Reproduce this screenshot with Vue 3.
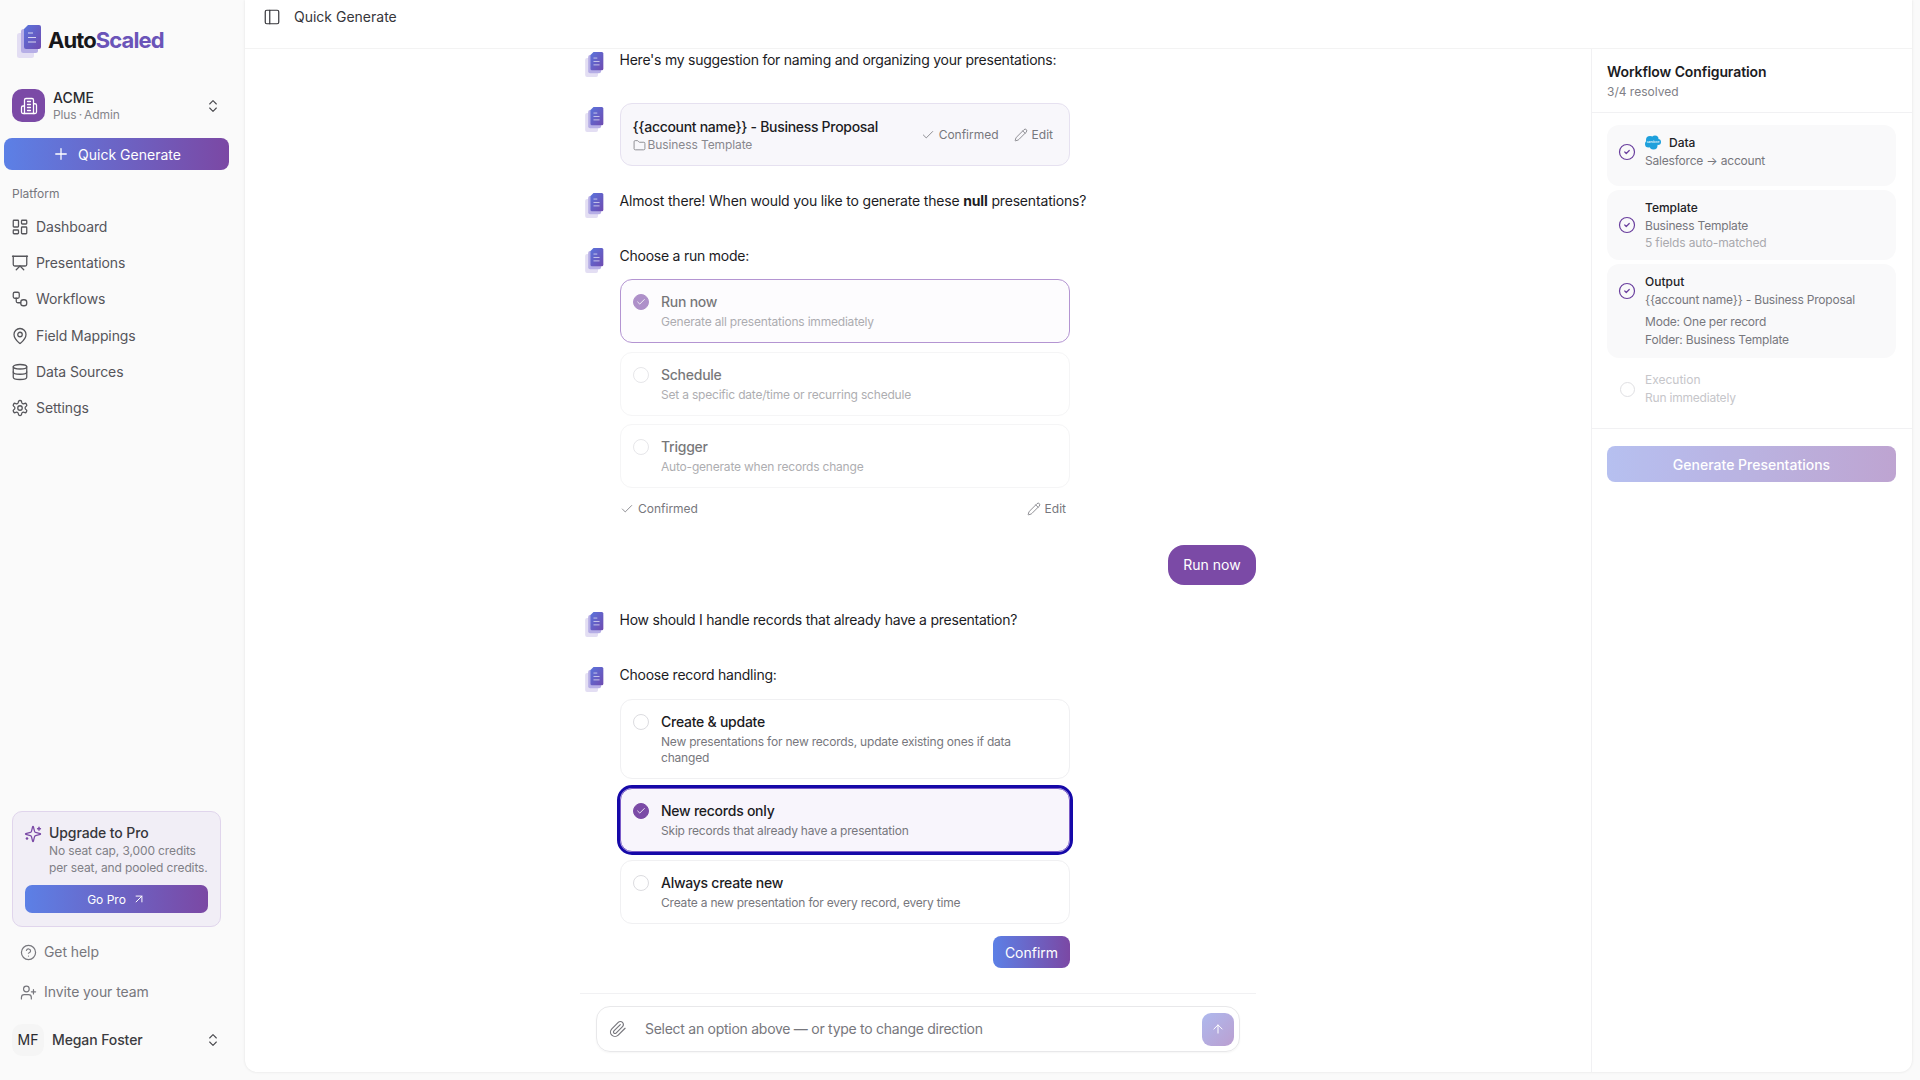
<template>
  <div class="page">
    <aside class="sidebar">
      <div class="logo">
        <svg class="logo-mark" viewBox="0 0 24 33" v-html="docMark"></svg>
        <span class="logo-text">Auto<span class="logo-accent">Scaled</span></span>
      </div>

      <div class="org">
        <span class="org-icon"><svg class="ic ic-18" viewBox="0 0 24 24" v-html="icons.building"></svg></span>
        <div class="org-text">
          <div class="org-name">ACME</div>
          <div class="org-plan">Plus&#8201;·&#8201;Admin</div>
        </div>
        <svg class="ic ic-16 chev" viewBox="0 0 24 24" v-html="icons.chevrons"></svg>
      </div>

      <button class="quick">
        <svg class="ic ic-18" viewBox="0 0 24 24" v-html="icons.plus"></svg>
        Quick Generate
      </button>

      <div class="section">Platform</div>
      <nav class="nav">
        <a v-for="n in nav" :key="n.label" class="nav-item">
          <svg class="ic ic-18" viewBox="0 0 24 24" v-html="icons[n.icon]"></svg>
          {{ n.label }}
        </a>
      </nav>

      <div class="upgrade">
        <div class="upgrade-head">
          <svg class="ic ic-18 sparkle" viewBox="0 0 24 24" v-html="icons.sparkles"></svg>
          <div>
            <div class="upgrade-title">Upgrade to Pro</div>
            <div class="upgrade-text">No seat cap, 3,000 credits per seat, and pooled credits.</div>
          </div>
        </div>
        <button class="gopro">Go Pro <svg class="ic ic-14" viewBox="0 0 24 24" v-html="icons.arrowUpRight"></svg></button>
      </div>

      <a class="side-link"><svg class="ic ic-17" viewBox="0 0 24 24" v-html="icons.help"></svg>Get help</a>
      <a class="side-link"><svg class="ic ic-17" viewBox="0 0 24 24" v-html="icons.userPlus"></svg>Invite your team</a>

      <div class="user">
        <span class="user-avatar">MF</span>
        <span class="user-name">Megan Foster</span>
        <svg class="ic ic-16 chev" viewBox="0 0 24 24" v-html="icons.chevrons"></svg>
      </div>
    </aside>

    <main class="main">
      <header class="topbar">
        <svg class="ic ic-18 panel-ic" viewBox="0 0 24 24" v-html="icons.panel"></svg>
        <span>Quick Generate</span>
      </header>

      <div class="body">
        <section class="chat">
          <div class="thread">
            <div class="msg first">
              <svg class="avatar" viewBox="0 0 24 33" v-html="docMark"></svg>
              <p>Here's my suggestion for naming and organizing your presentations:</p>
            </div>

            <div class="msg name-row">
              <svg class="avatar" viewBox="0 0 24 33" v-html="docMark"></svg>
              <div class="name-card">
                <div>
                  <div class="name-title">{{ accountName }} - Business Proposal</div>
                  <div class="name-sub"><svg class="ic ic-13" viewBox="0 0 24 24" v-html="icons.folder"></svg>Business Template</div>
                </div>
                <div class="name-actions">
                  <span class="meta"><svg class="ic ic-14" viewBox="0 0 24 24" v-html="icons.check"></svg>Confirmed</span>
                  <span class="meta"><svg class="ic ic-14" viewBox="0 0 24 24" v-html="icons.pencil"></svg>Edit</span>
                </div>
              </div>
            </div>

            <div class="msg almost">
              <svg class="avatar" viewBox="0 0 24 33" v-html="docMark"></svg>
              <p>Almost there! When would you like to generate these <b>null</b> presentations?</p>
            </div>

            <div class="msg choose">
              <svg class="avatar" viewBox="0 0 24 33" v-html="docMark"></svg>
              <p>Choose a run mode:</p>
            </div>

            <div class="options">
              <div v-for="o in runModes" :key="o.title" class="opt faded" :class="{ selected: o.selected }">
                <span class="radio" :class="{ on: o.selected }">
                  <svg v-if="o.selected" class="ic ic-10" viewBox="0 0 24 24" v-html="icons.check"></svg>
                </span>
                <div>
                  <div class="opt-title">{{ o.title }}</div>
                  <div class="opt-sub">{{ o.sub }}</div>
                </div>
              </div>
            </div>
            <div class="confirmed-row">
              <span class="meta"><svg class="ic ic-14" viewBox="0 0 24 24" v-html="icons.check"></svg>Confirmed</span>
              <span class="meta"><svg class="ic ic-14" viewBox="0 0 24 24" v-html="icons.pencil"></svg>Edit</span>
            </div>

            <div class="bubble">Run now</div>

            <div class="msg handle">
              <svg class="avatar" viewBox="0 0 24 33" v-html="docMark"></svg>
              <p>How should I handle records that already have a presentation?</p>
            </div>

            <div class="msg choose">
              <svg class="avatar" viewBox="0 0 24 33" v-html="docMark"></svg>
              <p>Choose record handling:</p>
            </div>

            <div class="options options-b">
              <div v-for="o in recordModes" :key="o.title" class="opt" :class="{ active: o.selected }">
                <span class="radio" :class="{ on: o.selected }">
                  <svg v-if="o.selected" class="ic ic-10" viewBox="0 0 24 24" v-html="icons.check"></svg>
                </span>
                <div>
                  <div class="opt-title">{{ o.title }}</div>
                  <div class="opt-sub">{{ o.sub }}</div>
                </div>
              </div>
            </div>
            <div class="confirm-row">
              <button class="confirm">Confirm</button>
            </div>
          </div>

          <div class="composer">
            <div class="input">
              <svg class="ic ic-18 clip" viewBox="0 0 24 24" v-html="icons.clip"></svg>
              <span class="placeholder">Select an option above — or type to change direction</span>
              <button class="send"><svg class="ic ic-14" viewBox="0 0 24 24" v-html="icons.arrowUp"></svg></button>
            </div>
          </div>
        </section>

        <aside class="panel">
          <div class="panel-head">
            <div class="panel-title">Workflow Configuration</div>
            <div class="panel-sub">3/4 resolved</div>
          </div>
          <div class="steps">
            <div class="step step-data">
              <div class="step-row">
                <svg class="ic ic-18 tick" viewBox="0 0 24 24" v-html="icons.circleCheck"></svg>
                <div>
                  <div class="step-title">
                    <svg class="sf" viewBox="0 0 32 30">
                      <g fill="#1ea0dc">
                        <circle cx="10" cy="10" r="8" />
                        <circle cx="20" cy="8" r="7" />
                        <circle cx="26" cy="14" r="6" />
                        <circle cx="17" cy="21" r="8" />
                        <circle cx="7" cy="18" r="7" />
                      </g>
                      <text x="16" y="16" class="sf-text">salesforce</text>
                    </svg>
                    Data
                  </div>
                  <div class="step-line">Salesforce → account</div>
                </div>
              </div>
            </div>
            <div class="step">
              <div class="step-row">
                <svg class="ic ic-18 tick" viewBox="0 0 24 24" v-html="icons.circleCheck"></svg>
                <div>
                  <div class="step-title">Template</div>
                  <div class="step-line">Business Template</div>
                  <div class="step-note">5 fields auto-matched</div>
                </div>
              </div>
            </div>
            <div class="step">
              <div class="step-row">
                <svg class="ic ic-18 tick" viewBox="0 0 24 24" v-html="icons.circleCheck"></svg>
                <div>
                  <div class="step-title">Output</div>
                  <div class="step-line">{{ accountName }} - Business Proposal</div>
                </div>
              </div>
              <div class="step-extra">
                <div class="step-line">Mode: One per record</div>
                <div class="step-line">Folder: Business Template</div>
              </div>
            </div>
            <div class="step pending">
              <div class="step-row">
                <span class="empty-tick"></span>
                <div>
                  <div class="step-title">Execution</div>
                  <div class="step-line">Run immediately</div>
                </div>
              </div>
            </div>
          </div>
          <div class="panel-foot">
            <button class="generate">Generate Presentations</button>
          </div>
        </aside>
      </div>
    </main>
  </div>
</template>

<script setup>
const accountName = '{{account name}}'

const docMark = `
  <defs><linearGradient id="docg" x1="0" y1="0" x2="1" y2="1"><stop offset="0" stop-color="#5a74dc"/><stop offset="1" stop-color="#6f4bb0"/></linearGradient></defs>
  <rect x="0" y="8" width="17" height="25" rx="2.5" fill="#e3def3"/>
  <rect x="4" y="4" width="17" height="24" rx="2.5" fill="#b6aee6"/>
  <path d="M11 0h11a2 2 0 0 1 2 2v20a2 2 0 0 1-2 2H9a2 2 0 0 1-2-2V4z" fill="url(#docg)"/>
  <path d="M11 8h5M11 12.5h8M11 17h8" stroke="#fff" stroke-opacity=".75" stroke-width="1.1" fill="none"/>`

const icons = {
  building: '<path d="M6 22V4a2 2 0 0 1 2-2h8a2 2 0 0 1 2 2v18Z"/><path d="M6 12H4a2 2 0 0 0-2 2v6a2 2 0 0 0 2 2h2"/><path d="M18 9h2a2 2 0 0 1 2 2v9a2 2 0 0 1-2 2h-2"/><path d="M10 6h4"/><path d="M10 10h4"/><path d="M10 14h4"/><path d="M10 18h4"/>',
  chevrons: '<path d="m7 15 5 5 5-5"/><path d="m7 9 5-5 5 5"/>',
  plus: '<path d="M5 12h14"/><path d="M12 5v14"/>',
  dashboard: '<rect width="7" height="9" x="3" y="3" rx="1"/><rect width="7" height="5" x="14" y="3" rx="1"/><rect width="7" height="9" x="14" y="12" rx="1"/><rect width="7" height="5" x="3" y="16" rx="1"/>',
  presentation: '<path d="M2 3h20"/><path d="M21 3v11a2 2 0 0 1-2 2H5a2 2 0 0 1-2-2V3"/><path d="m7 21 5-5 5 5"/>',
  workflow: '<rect width="8" height="8" x="3" y="3" rx="2"/><path d="M7 11v4a2 2 0 0 0 2 2h4"/><rect width="8" height="8" x="13" y="13" rx="3.5"/>',
  pin: '<path d="M20 10c0 4.993-5.539 10.193-7.399 11.799a1 1 0 0 1-1.202 0C9.539 20.193 4 14.993 4 10a8 8 0 0 1 16 0"/><circle cx="12" cy="10" r="3"/>',
  database: '<ellipse cx="12" cy="5" rx="9" ry="3"/><path d="M3 5V19A9 3 0 0 0 21 19V5"/><path d="M3 12A9 3 0 0 0 21 12"/>',
  settings: '<path d="M12.22 2h-.44a2 2 0 0 0-2 2v.18a2 2 0 0 1-1 1.73l-.43.25a2 2 0 0 1-2 0l-.15-.08a2 2 0 0 0-2.73.73l-.22.38a2 2 0 0 0 .73 2.73l.15.1a2 2 0 0 1 1 1.72v.51a2 2 0 0 1-1 1.74l-.15.09a2 2 0 0 0-.73 2.73l.22.38a2 2 0 0 0 2.73.73l.15-.08a2 2 0 0 1 2 0l.43.25a2 2 0 0 1 1 1.73V20a2 2 0 0 0 2 2h.44a2 2 0 0 0 2-2v-.18a2 2 0 0 1 1-1.73l.43-.25a2 2 0 0 1 2 0l.15.08a2 2 0 0 0 2.73-.73l.22-.39a2 2 0 0 0-.73-2.73l-.15-.08a2 2 0 0 1-1-1.74v-.5a2 2 0 0 1 1-1.74l.15-.09a2 2 0 0 0 .73-2.73l-.22-.38a2 2 0 0 0-2.73-.73l-.15.08a2 2 0 0 1-2 0l-.43-.25a2 2 0 0 1-1-1.73V4a2 2 0 0 0-2-2z"/><circle cx="12" cy="12" r="3"/>',
  sparkles: '<path d="M9.937 15.5A2 2 0 0 0 8.5 14.063l-6.135-1.582a.5.5 0 0 1 0-.962L8.5 9.936A2 2 0 0 0 9.937 8.5l1.582-6.135a.5.5 0 0 1 .963 0L14.063 8.5A2 2 0 0 0 15.5 9.937l6.135 1.581a.5.5 0 0 1 0 .964L15.5 14.063a2 2 0 0 0-1.437 1.437l-1.582 6.135a.5.5 0 0 1-.963 0z"/><path d="M20 3v4"/><path d="M22 5h-4"/><path d="M4 17v2"/><path d="M5 18H3"/>',
  arrowUpRight: '<path d="M7 7h10v10"/><path d="M7 17 17 7"/>',
  help: '<circle cx="12" cy="12" r="10"/><path d="M9.09 9a3 3 0 0 1 5.83 1c0 2-3 3-3 3"/><path d="M12 17h.01"/>',
  userPlus: '<path d="M16 21v-2a4 4 0 0 0-4-4H6a4 4 0 0 0-4 4v2"/><circle cx="9" cy="7" r="4"/><path d="M19 8v6"/><path d="M22 11h-6"/>',
  panel: '<rect width="18" height="18" x="3" y="3" rx="2"/><path d="M9 3v18"/>',
  folder: '<path d="M20 20a2 2 0 0 0 2-2V8a2 2 0 0 0-2-2h-7.9a2 2 0 0 1-1.69-.9L9.6 3.9A2 2 0 0 0 7.93 3H4a2 2 0 0 0-2 2v13a2 2 0 0 0 2 2Z"/>',
  check: '<path d="M20 6 9 17l-5-5"/>',
  pencil: '<path d="M21.174 6.812a1 1 0 0 0-3.986-3.987L3.842 16.174a2 2 0 0 0-.5.83l-1.321 4.352a.5.5 0 0 0 .623.622l4.353-1.32a2 2 0 0 0 .83-.497z"/><path d="m15 5 4 4"/>',
  clip: '<path d="m21.44 11.05-9.19 9.19a6 6 0 0 1-8.49-8.49l8.57-8.57A4 4 0 1 1 18 8.84l-8.59 8.57a2 2 0 0 1-2.83-2.83l8.49-8.48"/>',
  arrowUp: '<path d="m5 12 7-7 7 7"/><path d="M12 19V5"/>',
  circleCheck: '<circle cx="12" cy="12" r="10"/><path d="m9 12 2 2 4-4"/>',
}

const nav = [
  { label: 'Dashboard', icon: 'dashboard' },
  { label: 'Presentations', icon: 'presentation' },
  { label: 'Workflows', icon: 'workflow' },
  { label: 'Field Mappings', icon: 'pin' },
  { label: 'Data Sources', icon: 'database' },
  { label: 'Settings', icon: 'settings' },
]

const runModes = [
  { title: 'Run now', sub: 'Generate all presentations immediately', selected: true },
  { title: 'Schedule', sub: 'Set a specific date/time or recurring schedule' },
  { title: 'Trigger', sub: 'Auto-generate when records change' },
]

const recordModes = [
  { title: 'Create & update', sub: 'New presentations for new records, update existing ones if data changed' },
  { title: 'New records only', sub: 'Skip records that already have a presentation', selected: true },
  { title: 'Always create new', sub: 'Create a new presentation for every record, every time' },
]
</script>

<style>
html, body { margin: 0; background: #fafafa; overflow: hidden; }
</style>

<style scoped>
.page {
  display: flex;
  height: 1080px;
  background: #fafafa;
  font-family: Inter, "Liberation Sans", sans-serif;
  font-size: 14px;
  line-height: 20px;
  color: #1c1c1f;
  overflow: hidden;
}
p { margin: 0; letter-spacing: -0.24px; }
button { font-family: inherit; border: 0; cursor: pointer; }

.ic { fill: none; stroke: currentColor; stroke-width: 1.7; stroke-linecap: round; stroke-linejoin: round; flex: none; display: block; }
.ic-10 { width: 10px; height: 10px; stroke-width: 2; }
.ic-13 { width: 13px; height: 13px; }
.ic-14 { width: 14px; height: 14px; }
.ic-16 { width: 16px; height: 16px; }
.ic-17 { width: 17px; height: 17px; }
.ic-18 { width: 18px; height: 18px; }

/* sidebar */
.sidebar { width: 245px; flex: none; display: flex; flex-direction: column; height: 1080px; box-sizing: border-box; }
.logo { display: flex; align-items: center; padding: 25px 0 0 17px; height: 33px; }
.logo-mark { width: 24px; height: 33px; flex: none; }
.logo-text { margin: 0 0 4px 7px; font-size: 22px; font-weight: 700; letter-spacing: -0.9px; color: #17171a; }
.logo-accent { color: #6a54b8; }

.org { display: flex; align-items: center; margin: 31px 0 0 12px; width: 209px; height: 33px; }
.org-icon { width: 33px; height: 33px; border-radius: 10px; background: #7b4aa6; color: #fff; display: flex; align-items: center; justify-content: center; }
.org-text { margin-left: 8px; flex: 1; }
.org-name { font-size: 14px; line-height: 17px; font-weight: 500; color: #2a2a2e; }
.org-plan { font-size: 12px; line-height: 16px; margin-top: 1px; letter-spacing: -0.1px; color: #85858b; }
.chev { color: #47474c; stroke-width: 1.6; }

.quick {
  margin: 16px 0 0 4px; width: 225px; height: 32px; border-radius: 8px; color: #fff; font-size: 14px;
  background: linear-gradient(90deg, #5c80e6, #7b48a4);
  display: flex; align-items: center; justify-content: center; gap: 8px;
}

.section { margin: 16px 0 0 12px; font-size: 12px; line-height: 16px; color: #77777d; }
.nav { margin-top: 7px; display: flex; flex-direction: column; }
.nav-item { height: 36.2px; display: flex; align-items: center; gap: 7px; padding-left: 11px; letter-spacing: -0.1px; color: #55555a; }

.upgrade {
  margin: auto 0 0 12px; width: 209px; height: 116px; box-sizing: border-box; padding: 11px 12px 0;
  border: 1px solid #e0d5ec; border-radius: 10px; background: #f1eef6;
}
.upgrade-head { display: flex; gap: 7px; margin-left: -1px; }
.sparkle { color: #7b4aa6; margin-top: 2px; }
.upgrade-title { font-size: 14px; line-height: 20px; font-weight: 500; letter-spacing: -0.1px; color: #36363b; }
.upgrade-text { font-size: 12px; line-height: 16.5px; letter-spacing: -0.12px; color: #808086; width: 165px; }
.gopro {
  margin-top: 9px; width: 183px; height: 28px; border-radius: 7px; color: #fff; font-size: 12px;
  background: linear-gradient(90deg, #5c80e6, #7b48a4);
  display: flex; align-items: center; justify-content: center; gap: 6px;
}
.side-link { height: 40px; display: flex; align-items: center; gap: 7px; padding-left: 20px; letter-spacing: -0.08px; color: #77777d; }
.side-link:first-of-type { margin-top: 5px; }
.user { display: flex; align-items: center; margin: 12px 0 24px 12px; width: 209px; height: 32px; }
.user-avatar { width: 32px; height: 32px; border-radius: 10px; background: #f5f5f5; display: flex; align-items: center; justify-content: center; font-size: 14px; color: #2a2a2e; }
.user-name { flex: 1; margin-left: 8px; font-weight: 500; letter-spacing: -0.1px; color: #3b3b40; }

/* main */
.main {
  width: 1667px; height: 1072px; flex: none; display: flex; flex-direction: column;
  background: #fff; border-radius: 0 0 12px 12px; box-shadow: 0 0 3px rgba(0,0,0,.1);
}
.topbar { height: 49px; flex: none; box-sizing: border-box; border-bottom: 1px solid #f3f3f3; display: flex; align-items: flex-start; padding: 7px 0 0 18px; gap: 13px; color: #36363b; }
.panel-ic { margin-top: 1px; stroke-width: 1.6; }
.body { flex: 1; display: flex; min-height: 0; }

/* chat */
.chat { flex: 1; display: flex; flex-direction: column; align-items: center; min-width: 0; }
.thread { width: 676px; flex: 1; overflow: hidden; }
.msg { display: flex; padding-left: 5px; gap: 16px; }
.avatar { width: 18.5px; height: 25px; flex: none; margin-top: 2px; }
.first { margin-top: 1px; }
.name-row { margin-top: 26px; }
.name-row .avatar { margin-top: 4px; }
.almost { margin-top: 25px; }
.almost p { letter-spacing: -0.17px; }
.choose { margin-top: 28px; }
.handle { margin-top: 25px; }

.name-card {
  width: 450.5px; height: 63px; box-sizing: border-box; padding: 13px 13px 0 12px; border: 1px solid #e6e1f0; border-radius: 12px;
  background: #f8f7fb; display: flex; justify-content: space-between;
}
.name-title { font-weight: 500; line-height: 20px; letter-spacing: -0.3px; }
.name-sub { display: flex; align-items: center; gap: 2px; font-size: 12px; line-height: 16px; letter-spacing: -0.1px; color: #88888e; }
.name-actions { display: flex; gap: 15px; margin: 10px 3px 0 0; align-self: flex-start; }
.meta { display: flex; align-items: center; gap: 4px; font-size: 12px; line-height: 16px; color: #77777d; }
.meta .ic { stroke-width: 1.4; }

.options { margin: 6px 0 0 40px; width: 450px; display: flex; flex-direction: column; gap: 8px; }
.options-b { margin-top: 7px; }
.opt { box-sizing: border-box; border: 1px solid #f0f0f2; border-radius: 12px; padding: 12px 12px; display: flex; gap: 12px; background: #fff; }
.opt:first-child { margin-bottom: 1px; }
.opt-title { font-weight: 500; line-height: 20px; letter-spacing: -0.25px; }
.opt-sub { margin-top: 2px; font-size: 12px; line-height: 16px; letter-spacing: -0.2px; color: #77777d; }
.radio { width: 16px; height: 16px; box-sizing: border-box; border: 1px solid #dcdce0; border-radius: 50%; flex: none; margin-top: 2px; display: flex; align-items: center; justify-content: center; }
.radio.on { background: #7b4aa6; border-color: #7b4aa6; color: #fff; }
.faded { border-color: #f5f5f6; }
.faded .opt-title, .faded .opt-sub { opacity: .6; }
.faded .radio { opacity: .7; }
.faded.selected { border-color: #b495d2; background: #fdfcfe; }
.faded.selected .radio { opacity: .6; }
.active { background: #f8f5fc; border-color: #7a5ac8; outline: 3px solid #1508a8; outline-offset: 0; }

.confirmed-row { margin: 13px 0 0 40px; width: 446px; display: flex; justify-content: space-between; }
.bubble { margin: 28px 0 0 auto; width: 88px; height: 40px; border-radius: 16px; background: #7b4aa6; color: #fff; display: flex; align-items: center; justify-content: center; }
.confirm-row { margin: 12px 0 0 40px; width: 450px; display: flex; justify-content: flex-end; }
.confirm { width: 77px; height: 32px; border-radius: 8px; color: #fff; font-size: 14px; background: linear-gradient(90deg, #5c80e6, #7b48a4); }

.composer { width: 676px; height: 79px; flex: none; box-sizing: border-box; border-top: 1px solid #f1f1f3; padding: 12px 16px 0; }
.input { height: 46px; box-sizing: border-box; border: 1px solid #e8e8ea; border-radius: 14px; display: flex; align-items: center; padding: 0 5px 0 12px; box-shadow: 0 1px 2px rgba(0,0,0,.04); }
.clip { color: #77777d; stroke-width: 1.6; }
.placeholder { flex: 1; margin-left: 18px; color: #77777d; letter-spacing: -0.27px; }
.send { width: 32px; height: 33px; border-radius: 9px; color: #fff; display: flex; align-items: center; justify-content: center; padding: 0; background: linear-gradient(135deg, #aeb9ee, #bb9fd0); }

/* right panel */
.panel { width: 321px; flex: none; box-sizing: border-box; border-left: 1px solid #f1f1f3; }
.panel-head { height: 64px; box-sizing: border-box; padding: 13px 15px 0; border-bottom: 1px solid #f1f1f3; }
.panel-title { font-weight: 600; line-height: 20px; letter-spacing: -0.1px; }
.panel-sub { margin-top: 2px; font-size: 12px; line-height: 16px; color: #808086; }
.steps { padding: 12px 16px 12px 15px; display: flex; flex-direction: column; gap: 4px; border-bottom: 1px solid #f1f1f3; }
.step { background: #f9f9fa; border-radius: 12px; padding: 9px 11px; }
.step-data { height: 61px; box-sizing: border-box; }
.step-row { display: flex; align-items: center; gap: 9px; }
.tick { color: #6a3f9e; stroke-width: 1.6; }
.step-title { display: flex; align-items: center; gap: 8px; font-size: 12px; line-height: 18px; font-weight: 500; color: #222226; }
.step-line { font-size: 12px; line-height: 18px; letter-spacing: -0.2px; color: #77777d; }
.step-note { font-size: 12px; line-height: 16px; letter-spacing: -0.15px; color: #a9a9ae; }
.step-extra { margin: 4px 0 0 27px; }
.sf { width: 16px; height: 15px; margin-top: -2px; }
.sf-text { fill: #fff; font-size: 5px; text-anchor: middle; font-family: Inter, sans-serif; }
.pending { background: transparent; }
.pending .step-title, .pending .step-line { color: #c6c6ca; font-weight: 400; }
.empty-tick { width: 15px; height: 15px; box-sizing: border-box; margin: 0 1.5px; border: 1px solid #e0e0e3; border-radius: 50%; flex: none; }
.panel-foot { padding: 17px 16px 16px 15px; }
.generate { width: 100%; height: 36px; border-radius: 8px; color: #fff; font-size: 14px; font-weight: 500; background: linear-gradient(90deg, #b3bdf0, #bba0cf); opacity: .95; }
</style>
